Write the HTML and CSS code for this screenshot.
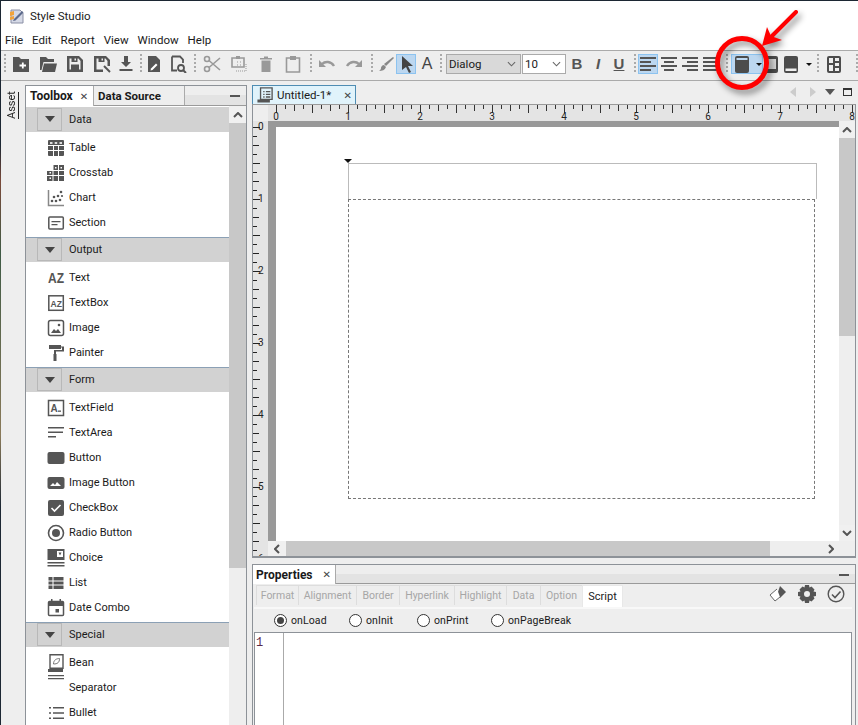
FILE: index.html
```html
<!DOCTYPE html>
<html lang="en">

<head>
    <meta charset="UTF-8">
    <meta name="viewport" content="width=device-width, initial-scale=1.0">
    <title>Style Studio</title>
    <link rel="stylesheet" href="styles.css">
</head>

<body>
    <div class="window">
        <div class="titlebar">
            <svg class="app-icon" viewBox="0 0 16 16">
                <path d="M2 2h9l3 3v10H2z" fill="#d5d9e6" stroke="#8a8fa5" />
                <path d="M1 4l4-1v4l-4 1zM1 9l4-1v3l-4 1z" fill="#f2a33a" />
                <path d="M5 11l8-8 1.500 1.500-8 8L4 13z" fill="#5c6a8c" />
            </svg>
            <span>Style Studio</span>
        </div>

        <div class="menubar">
            <span>File</span>
            <span>Edit</span>
            <span>Report</span>
            <span>View</span>
            <span>Window</span>
            <span>Help</span>
        </div>

        <div class="toolbar">
            <div class="group group-file">
                <span class="grip"></span>
                <div class="tools gap-9">
                    <svg class="ic" viewBox="0 0 18 18"><path d="M1 2h6l2 2h8v13H1z" /><path d="M7.500 10.500h6.500M10.800 7.500v6" stroke="#fff" stroke-width="1.800" /></svg>
                    <svg class="ic" viewBox="0 0 18 18"><path d="M1 2h6l2 2h6v3H4.500L2.500 15H1zM5 8.500h13L16 17H3z" /></svg>
                    <svg class="ic" viewBox="0 0 18 18"><path d="M2 1h11l4 4v12H1V1zM3.500 3.500v11h11V6l-2-2.500H11.500V7h-6V3.500zM8.500 3.500V5.500h1.500V3.500zM5 9.500h8v5H5z" fill-rule="evenodd" /></svg>
                    <svg class="ic" viewBox="0 0 18 18"><path d="M2 1h11l4 4v6h-2.500V6l-2-2.500H11.500V7h-6V3.500h-2v11H10V17H1V1zM8.500 3.500V5.500h1.500V3.500z" fill-rule="evenodd" /><path d="M11 11l6 6" stroke="#555" stroke-width="2" /></svg>
                    <svg class="ic ic-after-narrow" viewBox="0 0 18 18"><path d="M7 1h4v6h3l-5 5-5-5h3zM2.500 14h13v2h-13z" /></svg>
                </div>
            </div>

            <div class="group group-doc">
                <span class="grip"></span>
                <div class="tools gap-6">
                    <svg class="ic" viewBox="0 0 18 18"><path d="M3 1h8l4 4v12H3z" /><path d="M6 13.500l5-5 1.500 1.500-5 5-2 .5z" fill="#fff" /></svg>
                    <svg class="ic" viewBox="0 0 18 18"><path d="M3 1.500h8l3 3V8M3 1.500V15.500H8" fill="none" stroke="#555" stroke-width="1.800" /><circle cx="12" cy="13" r="3" fill="none" stroke="#555" stroke-width="1.800" /><path d="M14 15l3 3" stroke="#555" stroke-width="2" /></svg>
                </div>
            </div>

            <div class="group group-edit">
                <span class="grip"></span>
                <div class="tools gap-9 off">
                    <svg class="ic" viewBox="0 0 18 18"><circle cx="4" cy="4" r="2.500" fill="none" stroke="#999" stroke-width="1.600" /><circle cx="4" cy="14" r="2.500" fill="none" stroke="#999" stroke-width="1.600" /><path d="M6 5.500L17 15M6 12.500L17 3" stroke="#999" stroke-width="1.600" /></svg>
                    <svg class="ic" viewBox="0 0 18 18"><path d="M2 3h12v9H2z" fill="none" stroke="#999" stroke-width="1.600" /><path d="M6 1h4v3H6z" /><path d="M7 7h1M10 7h1M7 10h1M10 10h1M16 9v7M6 16h10" stroke="#999" stroke-dasharray="1 1" /></svg>
                    <svg class="ic" viewBox="0 0 18 18"><path d="M3 3h12v1.500H3zM7 1.500h4V3H7zM4.500 5.500h9V17h-9z" /></svg>
                    <svg class="ic" viewBox="0 0 18 18"><path d="M2.500 3h13v14h-13z" fill="none" stroke="#999" stroke-width="1.600" /><path d="M6 1h6v4H6z" /></svg>
                </div>
            </div>

            <div class="group group-undo">
                <span class="grip"></span>
                <div class="tools gap-9 off">
                    <svg class="ic" viewBox="0 0 18 18"><path d="M4 9c3-3 9-3 12 2" fill="none" stroke="#999" stroke-width="2.400" /><path d="M1 5v7h7z" /></svg>
                    <svg class="ic" viewBox="0 0 18 18"><path d="M14 9c-3-3-9-3-12 2" fill="none" stroke="#999" stroke-width="2.400" /><path d="M17 5v7h-7z" /></svg>
                </div>
            </div>

            <div class="group group-select">
                <span class="grip"></span>
                <div class="tools gap-2">
                    <svg class="ic" viewBox="0 0 18 18"><path d="M17 2l1 1-8 8-2-2z" fill="#888" /><path d="M8 10l2 2c-1 3-4 4-7 4 1.500-1 2-2 2-3s1-3 3-3z" fill="#888" /></svg>
                    <span class="tool-on tool-on-20"><svg class="ic" viewBox="0 0 18 18"><path d="M5 1l11 10h-5l3 6-2 1-3-6-4 3z" fill="#444" /></svg></span>
                    <span class="glyph glyph-a">A</span>
                </div>
            </div>

            <div class="group group-font">
                <span class="grip"></span>
                <div class="combo combo-font">
                    <span>Dialog</span>
                    <svg class="chev" viewBox="0 0 10 6"><path d="M1 1l4 4 4-4" /></svg>
                </div>
                <div class="combo combo-size">
                    <span>10</span>
                    <svg class="chev" viewBox="0 0 10 6"><path d="M1 1l4 4 4-4" /></svg>
                </div>
                <div class="tools gap-3 tools-style">
                    <span class="glyph glyph-b">B</span>
                    <span class="glyph glyph-i">I</span>
                    <span class="glyph glyph-u">U</span>
                </div>
            </div>

            <div class="group group-align">
                <span class="grip"></span>
                <div class="tools gap-3">
                    <span class="tool-on tool-on-20 tool-on-pull"><svg class="ic" viewBox="0 0 18 18"><path d="M1 2h16v2H1zM1 6h11v2H1zM1 10h16v2H1zM1 14h11v2H1z" /></svg></span>
                    <svg class="ic" viewBox="0 0 18 18"><path d="M1 2h16v2H1zM4 6h10v2H4zM1 10h16v2H1zM4 14h10v2H4z" /></svg>
                    <svg class="ic" viewBox="0 0 18 18"><path d="M1 2h16v2H1zM6 6h11v2H6zM1 10h16v2H1zM6 14h11v2H6z" /></svg>
                    <svg class="ic" viewBox="0 0 18 18"><path d="M1 2h16v2H1zM1 6h16v2H1zM1 10h16v2H1zM1 14h16v2H1z" /></svg>
                </div>
            </div>

            <div class="group group-band">
                <span class="grip"></span>
                <div class="tool-on tool-on-band">
                    <svg class="ic ic-band" viewBox="0 0 14 17"><rect width="14" height="17" rx="2" /><path d="M1.500 2h11v2h-11z" fill="#bcd7f0" /></svg>
                    <span class="caret caret-band"></span>
                </div>
                <svg class="ic ic-band ic-band-mid" viewBox="0 0 14 17"><rect width="14" height="17" rx="2" /><path d="M2 3h10v10H2z" fill="#d8d8d8" /></svg>
                <svg class="ic ic-band ic-band-end" viewBox="0 0 14 17"><rect width="14" height="17" rx="2" /><path d="M1.500 12.500h11v2.500h-11z" fill="#eee" /></svg>
                <span class="caret caret-last"></span>
            </div>

            <div class="group group-layout">
                <span class="grip"></span>
                <svg class="ic ic-layout" viewBox="0 0 14 17"><rect width="14" height="17" rx="2" /><path d="M2 2h4v5H2zM8 2h4v3H8zM8 7h4v3H8zM2 9h4v6H2zM8 12h4v3H8z" fill="#eee" /></svg>
                <span class="grip grip-end"></span>
            </div>
        </div>

        <div class="main">
            <div class="rail"><span class="rail-label">Asset</span></div>

            <div class="toolbox">
                <div class="tabstrip">
                    <div class="tab tab-on tab-toolbox">Toolbox <span class="tab-x">&#10005;</span></div>
                    <div class="tab tab-source">Data Source</div>
                    <span class="minimize"></span>
                </div>

                <div class="toolbox-body">
                    <div class="palette">
                        <div class="section section-first">
                            <div class="section-head"><span class="toggle"></span>Data</div>
                            <div class="section-items">
                                <div class="item"><svg class="ic" viewBox="0 0 18 18"><rect x="1" y="1" width="16" height="16" rx="1" /><path d="M3 3h2.500v2H3zM7.700 3h2.500v2H7.700zM12.500 3H15v2h-2.500z" fill="#ddd" /><path d="M0 6.500h18M0 11.500h18M6.500 6v12M11.500 6v12" stroke="#fff" /></svg>Table</div>
                                <div class="item"><svg class="ic" viewBox="0 0 18 18"><path d="M6 1h11v16H0V6h6z" /><path d="M0 6.500h18M0 11.500h18M6 1v17M11.500 1v17" stroke="#fff" /><path d="M8 3h1.500v1.500H8zM13.500 3H15v1.500h-1.500zM2.500 13.500H4V15H2.500zM2.500 8H4v1.500H2.500z" fill="#fff" /></svg>Crosstab</div>
                                <div class="item"><svg class="ic" viewBox="0 0 18 18"><path d="M1.500 1v15.500H17" fill="none" stroke="#888" stroke-width="1.500" /><circle cx="5" cy="12" r="1.300" /><circle cx="9" cy="12" r="1.300" /><circle cx="13" cy="11" r="1.300" /><circle cx="7" cy="8" r="1.300" /><circle cx="11" cy="7" r="1.300" /><circle cx="14" cy="3" r="1.300" /><circle cx="15" cy="7" r="1.100" /></svg>Chart</div>
                                <div class="item"><svg class="ic" viewBox="0 0 18 18"><rect x="1.800" y="3" width="14.500" height="12" rx="1" fill="none" stroke="#555" stroke-width="1.500" /><path d="M4.500 7h9v1.300h-9zM4.500 10h6v1.300h-6z" /></svg>Section</div>
                            </div>
                        </div>

                        <div class="section">
                            <div class="section-head"><span class="toggle"></span>Output</div>
                            <div class="section-items">
                                <div class="item"><svg class="ic" viewBox="0 0 18 18"><text class="ic-text" x="1" y="11.500" font-size="12" transform="scale(1 1.200)">AZ</text></svg>Text</div>
                                <div class="item"><svg class="ic" viewBox="0 0 18 18"><rect x="1.800" y="1.800" width="14.500" height="14.500" fill="none" stroke="#555" stroke-width="1.500" /><text class="ic-text" x="3.500" y="12.500" font-size="8.500">AZ</text></svg>TextBox</div>
                                <div class="item"><svg class="ic" viewBox="0 0 18 18"><rect x="1.500" y="1.500" width="15" height="15" rx="2" fill="none" stroke="#555" stroke-width="1.500" /><path d="M4 14l3-4 2 2 2-2 3 4z" /><circle cx="12" cy="6" r="1.300" /></svg>Image</div>
                                <div class="item"><svg class="ic" viewBox="0 0 18 18"><path d="M2 1h12v4H2zM14 2.500h3v5H9V10H7V6h8V3.500h-1zM6.500 10h3v7h-3z" /></svg>Painter</div>
                            </div>
                        </div>

                        <div class="section">
                            <div class="section-head"><span class="toggle"></span>Form</div>
                            <div class="section-items">
                                <div class="item"><svg class="ic" viewBox="0 0 18 18"><rect x="1.500" y="1.500" width="15" height="15" fill="none" stroke="#555" stroke-width="1.500" /><text class="ic-text" x="3.500" y="12.500" font-size="10">A</text><path d="M11 11.500h3v1.300h-3z" /></svg>TextField</div>
                                <div class="item"><svg class="ic" viewBox="0 0 18 18"><path d="M1 3h16v1.400H1zM1 7.500h15v1.400H1zM1 12h8v1.400H1z" /></svg>TextArea</div>
                                <div class="item"><svg class="ic" viewBox="0 0 18 18"><rect x="0.500" y="3" width="17" height="12" rx="2" /></svg>Button</div>
                                <div class="item"><svg class="ic" viewBox="0 0 18 18"><rect x="0.500" y="3" width="17" height="12" rx="2" /><path d="M3 12l3-3 2 2 2-3 4 4z" fill="#fff" /></svg>Image Button</div>
                                <div class="item"><svg class="ic" viewBox="0 0 18 18"><rect x="1" y="1" width="16" height="16" rx="2" /><path d="M4.500 9l3 3 6-6" fill="none" stroke="#fff" stroke-width="1.600" /></svg>CheckBox</div>
                                <div class="item"><svg class="ic" viewBox="0 0 18 18"><circle cx="9" cy="9" r="7.500" fill="none" stroke="#555" stroke-width="1.600" /><circle cx="9" cy="9" r="4" /></svg>Radio Button</div>
                                <div class="item"><svg class="ic" viewBox="0 0 18 18"><path d="M0.500 0h17v11h-17z" /><path d="M10 2h6v6h-6z" fill="#fff" /><path d="M11.500 3.500h3l-1.500 3z" /><path d="M0.500 13h17v1.400h-17zM0.500 16h17v1.400h-17z" /></svg>Choice</div>
                                <div class="item"><svg class="ic" viewBox="0 0 18 18"><path d="M1.500 3h15v12h-15z" /><path d="M1 7h17M1 11h17M6 3v12" stroke="#fff" /></svg>List</div>
                                <div class="item"><svg class="ic" viewBox="0 0 18 18"><rect x="1.500" y="2.500" width="15" height="14" rx="1" fill="none" stroke="#555" stroke-width="1.500" /><path d="M1.500 3h15v4h-15zM4 0h1.500v3H4zM12.500 0H14v3h-1.500zM8.500 10H12v3.500H8.500z" /></svg>Date Combo</div>
                            </div>
                        </div>

                        <div class="section">
                            <div class="section-head"><span class="toggle"></span>Special</div>
                            <div class="section-items">
                                <div class="item"><svg class="ic" viewBox="0 0 18 18"><path d="M3 0.800h13v13.500H3z" fill="none" stroke="#555" stroke-width="1.400" /><path d="M6.500 10c0-4 3-5.500 6-5.500 0 4-2 5.500-6 5.500z" fill="none" stroke="#777" /><path d="M1 15h15v3H1z" /></svg>Bean</div>
                                <div class="item"><svg class="ic ic-high" viewBox="0 0 18 18"><path d="M1 3h16v1.300H1zM1 6h16v1.300H1z" /></svg>Separator</div>
                                <div class="item"><svg class="ic" viewBox="0 0 18 18"><path d="M6 3h11v1.400H6zM6 8.300h11v1.400H6zM6 13.600h11V15H6zM2 3h2v1.400H2zM2 8.300h2v1.400H2zM2 13.600h2V15H2z" /></svg>Bullet</div>
                            </div>
                        </div>
                    </div>

                    <div class="scroll-v scroll-palette">
                        <div class="scroll-btn"><svg class="arrow" viewBox="0 0 10 6"><path d="M1 5l4-4 4 4" /></svg></div>
                        <div class="scroll-thumb"></div>
                    </div>
                </div>
            </div>

            <div class="workspace">
                <div class="doc-tabs">
                    <div class="doc-tab">
                        <svg class="ic" viewBox="0 0 18 18"><path d="M4 1h13v13H4z" fill="none" stroke="#555" stroke-width="1.500" /><path d="M7 4.500h1.500V6H7zM10 4.500h5V6h-5zM7 7.500h1.500V9H7zM10 7.500h5V9h-5zM7 10.500h1.500V12H7zM10 10.500h5V12h-5zM0.500 14h14v3.500H0.500z" /></svg>
                        <span>Untitled-1*</span>
                        <span class="tab-x">&#10005;</span>
                    </div>
                    <div class="doc-controls">
                        <span class="nav nav-left"></span>
                        <span class="nav nav-right"></span>
                        <span class="nav-down"></span>
                        <span class="maximize"></span>
                    </div>
                </div>

                <div class="doc">
                    <div class="ruler-row">
                        <div class="ruler-corner"></div>
                        <div class="ruler-x">
                            <span>0</span><span>1</span><span>2</span><span>3</span><span>4</span><span>5</span><span>6</span><span>7</span><span>8</span>
                        </div>
                    </div>
                    <div class="doc-body">
                        <div class="ruler-y">
                            <span>0</span><span>1</span><span>2</span><span>3</span><span>4</span><span>5</span><span>6</span>
                        </div>
                        <div class="doc-view">
                            <div class="doc-view-top">
                                <div class="canvas">
                                    <div class="page">
                                        <div class="report-header"></div>
                                        <div class="report-body"></div>
                                    </div>
                                </div>
                                <div class="scroll-v scroll-doc">
                                    <div class="scroll-btn"><svg class="arrow" viewBox="0 0 10 6"><path d="M1 5l4-4 4 4" /></svg></div>
                                    <div class="scroll-thumb"></div>
                                    <div class="scroll-btn scroll-btn-end"><svg class="arrow" viewBox="0 0 10 6"><path d="M1 1l4 4 4-4" /></svg></div>
                                </div>
                            </div>
                            <div class="scroll-h">
                                <div class="scroll-btn-h"><svg class="arrow-h" viewBox="0 0 6 10"><path d="M5 1L1 5l4 4" /></svg></div>
                                <div class="scroll-thumb-h"></div>
                                <div class="scroll-btn-h scroll-btn-h-end"><svg class="arrow-h" viewBox="0 0 6 10"><path d="M1 1l4 4-4 4" /></svg></div>
                            </div>
                        </div>
                    </div>
                </div>

                <div class="properties">
                    <div class="tabstrip tabstrip-props">
                        <div class="tab tab-on tab-props">Properties <span class="tab-x">&#10005;</span></div>
                        <span class="minimize"></span>
                    </div>

                    <div class="subtabs">
                        <span class="subtab subtab-format">Format</span>
                        <span class="subtab subtab-alignment">Alignment</span>
                        <span class="subtab subtab-border">Border</span>
                        <span class="subtab subtab-hyperlink">Hyperlink</span>
                        <span class="subtab subtab-highlight">Highlight</span>
                        <span class="subtab subtab-data">Data</span>
                        <span class="subtab subtab-option">Option</span>
                        <span class="subtab subtab-script">Script</span>
                        <div class="prop-actions">
                            <svg class="ic" viewBox="0 0 18 18"><path d="M11 1l6 6-6 6-3-3z" /><path d="M8 4L1 10l5 6 5-4" fill="#fff" stroke="#666" /></svg>
                            <svg class="ic" viewBox="0 0 18 18"><path d="M7 0h4l.5 2.500 2-1 3 3-1 2L18 7v4l-2.500.5 1 2-3 3-2-1L11 18H7l-.5-2.500-2 1-3-3 1-2L0 11V7l2.500-.5-1-2 3-3 2 1zM9 6a3 3 0 1 0 0 6 3 3 0 0 0 0-6z" fill-rule="evenodd" /></svg>
                            <svg class="ic" viewBox="0 0 18 18"><circle cx="9" cy="9" r="7.800" fill="none" stroke="#555" stroke-width="1.400" /><path d="M5 9.500l3 3 5.500-6" fill="none" stroke="#555" stroke-width="1.600" /></svg>
                        </div>
                    </div>

                    <div class="events">
                        <label class="event event-load"><span class="radio radio-on"></span>onLoad</label>
                        <label class="event event-init"><span class="radio"></span>onInit</label>
                        <label class="event event-print"><span class="radio"></span>onPrint</label>
                        <label class="event event-break"><span class="radio"></span>onPageBreak</label>
                    </div>

                    <div class="editor">
                        <div class="gutter">1</div>
                    </div>
                </div>
            </div>
        </div>

        <!-- red callout drawn on top of the screenshot -->
        <svg class="callout" viewBox="0 0 120 100">
            <circle cx="42" cy="63" r="24.500" fill="none" stroke="#f00" stroke-width="5" />
            <path d="M96 12L72 36" stroke="#f00" stroke-width="4" stroke-linecap="round" />
            <path d="M62 46l5-19 4 9 11 4z" fill="#f00" />
        </svg>
    </div>
</body>

</html>
```

FILE: styles.css
```css
* {
    box-sizing: border-box;
    padding: 0;
    margin: 0;
}

html,
body {
    height: 100%;
    overflow: hidden;
}

body {
    background: linear-gradient(#1c2733 0 20%, #7a4a3a 25%, #3f5a45 35%, #8a7a5a 60%, #1c2733 70%);
    padding: 1px 0 0 1px;
    font-family: Roboto, "Liberation Sans", sans-serif;
    font-size: 11px;
    color: #1a1a1a;
}

.window {
    position: relative;
    width: 857px;
    height: 724px;
    background-color: #eee;
    display: flex;
    flex-direction: column;
    overflow: hidden;
}

.ic {
    width: 18px;
    height: 18px;
    fill: #555;
    flex: none;
}

.ic-text {
    font-family: "Liberation Sans", sans-serif;
    font-weight: bold;
    fill: #555;
}

/* title and menu */
.titlebar {
    height: 29px;
    flex: none;
    background-color: white;
    display: flex;
    align-items: center;
    padding: 1px 0 0 8px;
    gap: 5px;
    font-size: 11.5px;
}

.app-icon {
    width: 16px;
    height: 16px;
}

.menubar {
    height: 20px;
    flex: none;
    background-color: white;
    display: flex;
    align-items: center;
    padding-left: 4px;
    gap: 9px;
    font-size: 11.5px;
}

/* toolbar */
.toolbar {
    height: 31px;
    flex: none;
    display: flex;
    align-items: center;
    padding-bottom: 3px;
    border-top: 1px solid #aaa;
    border-bottom: 1px solid #aaa;
    background-color: #eee;
}

.group {
    display: flex;
    align-items: center;
}

.tools {
    display: flex;
    align-items: center;
}

.gap-2 {
    gap: 2px;
}

.gap-3 {
    gap: 3px;
}

.gap-6 {
    gap: 6px;
}

.gap-9 {
    gap: 9px;
}

.off .ic {
    fill: #999;
}

.grip {
    width: 2px;
    height: 20px;
    flex: none;
    background: repeating-linear-gradient(#aaa 0 2px, transparent 2px 4px);
}

.group-file {
    margin-left: 3px;
}

.group-file .grip {
    margin-right: 6px;
}

.ic-after-narrow {
    margin-left: -3px;
}

.group-doc {
    margin-left: 5px;
}

.group-doc .grip {
    margin-right: 3px;
}

.group-edit {
    margin-left: 7px;
}

.group-edit .grip {
    margin-right: 7px;
}

.group-undo {
    margin-left: 8px;
}

.group-undo .grip {
    margin-right: 6px;
}

.group-select {
    margin-left: 8px;
}

.group-select .grip {
    margin-right: 3px;
}

.group-font {
    margin-left: 4px;
}

.group-font .grip {
    margin-right: 4px;
}

.group-align {
    margin-left: 6px;
}

.group-align .grip {
    margin-right: 2px;
}

.group-band {
    margin-left: 6px;
}

.group-band .grip {
    margin-right: 3px;
}

.group-layout {
    margin-left: 5px;
}

.group-layout .grip {
    margin-right: 8px;
}

.grip-end {
    margin: 0 0 0 15px;
}

.tool-on {
    background-color: #bcd7f0;
    border: 1px solid #8cc3f0;
    display: flex;
    align-items: center;
    justify-content: center;
}

.tool-on-20 {
    width: 20px;
    height: 20px;
}

.tool-on-pull {
    margin-right: -1px;
}

.tool-on-band {
    width: 32px;
    height: 20px;
    position: relative;
    justify-content: flex-start;
    padding-left: 3px;
}

.ic-band {
    width: 14px;
    height: 17px;
    fill: #4c4c4c;
}

.ic-band-mid {
    margin-left: 1px;
}

.ic-band-end {
    margin-left: 6px;
}

.ic-layout {
    width: 14px;
    height: 17px;
    fill: #4c4c4c;
}

.caret {
    width: 0;
    height: 0;
    border-left: 3px solid transparent;
    border-right: 3px solid transparent;
    border-top: 3px solid #111;
}

.caret-band {
    margin-left: 7px;
}

.caret-last {
    margin-left: 8px;
}

.glyph {
    width: 18px;
    text-align: center;
    font-family: "Liberation Sans", sans-serif;
    font-size: 15px;
    font-weight: bold;
    color: #555;
    line-height: 18px;
}

.glyph-a {
    font-weight: normal;
    color: #444;
    font-size: 16px;
}

.glyph-i {
    font-style: italic;
}

.glyph-u {
    text-decoration: underline;
}

.combo {
    height: 20px;
    display: flex;
    align-items: center;
    justify-content: space-between;
    border: 1px solid #aaa;
    padding: 0 4px 0 2px;
    font-size: 11.5px;
}

.combo-font {
    width: 75px;
    background-color: #d9d9d9;
}

.combo-size {
    width: 44px;
    margin-left: 1px;
    background-color: white;
}

.chev {
    width: 9px;
    height: 6px;
    fill: none;
    stroke: #666;
    stroke-width: 1.200;
}

.tools-style {
    margin-left: 2px;
}

/* main area */
.main {
    flex: 1;
    display: flex;
    min-height: 0;
}

.rail {
    width: 24px;
    flex: none;
    display: flex;
    justify-content: center;
    padding: 11px 2px 0 0;
}

.rail-label {
    writing-mode: vertical-rl;
    transform: rotate(180deg);
    height: 27px;
    font-size: 11px;
    line-height: 12px;
    color: #222;
    border-left: 1px solid #222;
}

/* toolbox panel */
.toolbox {
    width: 222px;
    flex: none;
    margin-top: 4px;
    border: 1px solid #8d9298;
    border-bottom: none;
    background-color: #eee;
    display: flex;
    flex-direction: column;
}

.tabstrip {
    height: 20px;
    flex: none;
    display: flex;
    position: relative;
    border-bottom: 1px solid #9a9a9a;
    background: linear-gradient(#eee 0 50%, #e3e3e3 50%);
    font-size: 12px;
}

.tab {
    display: flex;
    align-items: center;
    font-weight: bold;
    border-right: 1px solid #aaa;
}

.tab-on {
    background-color: white;
    margin-bottom: -1px;
}

.tab-toolbox {
    width: 68px;
    padding-left: 4px;
    gap: 7px;
}

.tab-source {
    width: 91px;
    padding-left: 4px;
    background-color: #eee;
    font-size: 11.5px;
}

.tab-x {
    font-family: "DejaVu Sans", sans-serif;
    font-size: 10px;
    font-weight: normal;
    color: #444;
}

.minimize {
    width: 10px;
    height: 2px;
    background-color: #555;
    margin: 9px 6px 0 auto;
}

.toolbox-body {
    flex: 1;
    display: flex;
    min-height: 0;
    overflow: hidden;
}

.palette {
    width: 203px;
    flex: none;
    background-color: white;
    padding-top: 1px;
}

.section-head {
    height: 25px;
    display: flex;
    align-items: center;
    gap: 7px;
    padding: 0 0 1px 11px;
    background-color: #d2d2d2;
    border-top: 1px solid #8ba0b5;
}

.section-first .section-head {
    border-top: none;
}

.toggle {
    width: 25px;
    height: 23px;
    border: 1px solid #b8b8b8;
    display: flex;
    align-items: center;
    justify-content: center;
}

.toggle::before {
    content: "";
    border-left: 5px solid transparent;
    border-right: 5px solid transparent;
    border-top: 6px solid #444;
}

.section-items {
    padding: 3px 0 2px;
}

.item {
    height: 25px;
    display: flex;
    align-items: center;
    gap: 4px;
    padding-left: 21px;
}

.ic-high {
    margin-top: -14px;
}

.scroll-v {
    width: 17px;
    flex: none;
    display: flex;
    flex-direction: column;
}

.scroll-btn {
    height: 17px;
    flex: none;
    display: flex;
    align-items: center;
    justify-content: center;
    background-color: #f0f0f0;
}

.scroll-btn-end {
    margin-top: auto;
    height: 16px;
}

.arrow {
    width: 10px;
    height: 6px;
    fill: none;
    stroke: #555;
    stroke-width: 2;
}

.scroll-thumb {
    background-color: #c8c8c8;
}

.scroll-palette .scroll-thumb {
    height: 445px;
}

.scroll-doc .scroll-thumb {
    height: 198px;
}

/* workspace */
.workspace {
    width: 604px;
    flex: none;
    margin-left: 5px;
    margin-top: 4px;
    display: flex;
    flex-direction: column;
}

.doc-tabs {
    height: 19px;
    flex: none;
    display: flex;
}

.doc-tab {
    width: 104px;
    display: flex;
    align-items: center;
    gap: 4px;
    padding: 0 3px 0 4px;
    background-color: #e0f3fb;
    border: 1px solid #4f8db3;
    border-bottom: none;
    font-size: 11.5px;
    white-space: nowrap;
}

.doc-tab .ic {
    width: 16px;
    height: 16px;
}

.doc-tab .tab-x {
    margin-left: auto;
}

.doc-controls {
    flex: 1;
    display: flex;
    align-items: center;
    justify-content: flex-end;
    padding: 0 4px 5px 0;
}

.nav {
    width: 0;
    height: 0;
    border-top: 5px solid transparent;
    border-bottom: 5px solid transparent;
}

.nav-left {
    border-right: 6px solid #ccc;
    margin-right: 14px;
}

.nav-right {
    border-left: 6px solid #ccc;
    margin-right: 9px;
}

.nav-down {
    border-left: 5px solid transparent;
    border-right: 5px solid transparent;
    border-top: 6px solid #555;
    margin-right: 8px;
}

.maximize {
    width: 9px;
    height: 8px;
    border: 1px solid #333;
    border-top-width: 2px;
}

.doc {
    height: 454px;
    flex: none;
    display: flex;
    flex-direction: column;
    border-left: 1px solid #8d9298;
    border-right: 1px solid #8d9298;
    border-bottom: 2px solid #8d9298;
    border-top: 1px solid #9a9a9a;
}

.ruler-row {
    height: 16px;
    flex: none;
    display: flex;
}

.ruler-corner {
    width: 15px;
    flex: none;
}

.ruler-x {
    flex: 1;
    display: flex;
    align-items: flex-end;
    overflow: hidden;
    background:
        linear-gradient(to right, #333 1px, transparent 1px) 8px 0/36px 8px repeat-x,
        linear-gradient(to right, #333 1px, transparent 1px) 8px 0/18px 6px repeat-x,
        linear-gradient(to right, #333 1px, transparent 1px) 8px 0/9px 4px repeat-x,
        #e4e4e4;
}

.ruler-x span {
    width: 72px;
    flex: none;
    text-align: center;
    font-size: 10px;
    line-height: 9px;
    color: #222;
}

.ruler-x span:first-child {
    margin-left: -28px;
}

.doc-body {
    flex: 1;
    display: flex;
    min-height: 0;
}

.ruler-y {
    width: 15px;
    flex: none;
    display: flex;
    flex-direction: column;
    overflow: hidden;
    background:
        linear-gradient(#222 1px, transparent 1px) 0 6px/7px 36px repeat-y,
        linear-gradient(#222 1px, transparent 1px) 0 6px/6px 18px repeat-y,
        linear-gradient(#222 1px, transparent 1px) 0 6px/4px 9px repeat-y,
        #e4e4e4;
}

.ruler-y span {
    height: 72px;
    flex: none;
    display: flex;
    align-items: center;
    padding-left: 5px;
    font-size: 10px;
    color: #222;
}

.ruler-y span:first-child {
    margin-top: -31px;
}

.doc-view {
    flex: 1;
    display: flex;
    flex-direction: column;
    min-width: 0;
}

.doc-view-top {
    height: 420px;
    flex: none;
    display: flex;
}

.canvas {
    flex: 1;
    background-color: #999;
    padding: 6px 0 0 8px;
}

.page {
    height: 100%;
    background-color: white;
    padding: 36px 0 0 72px;
}

.report-header {
    position: relative;
    width: 469px;
    height: 36px;
    border: 1px solid #bbb;
    border-bottom: none;
}

.report-header::before {
    content: "";
    position: absolute;
    left: -5px;
    top: -5px;
    border-left: 4px solid transparent;
    border-right: 4px solid transparent;
    border-top: 4px solid #111;
}

.report-body {
    width: 467px;
    height: 300px;
    border: 1px dashed #777;
}

.scroll-doc {
    width: 16px;
    background-color: #eee;
}

.scroll-h {
    height: 15px;
    flex: none;
    display: flex;
    background-color: #eee;
}

.scroll-btn-h {
    width: 18px;
    flex: none;
    display: flex;
    align-items: center;
    justify-content: center;
    background-color: #f0f0f0;
}

.scroll-btn-h-end {
    margin-left: auto;
    width: 48px;
    justify-content: flex-end;
    padding-right: 21px;
    background: none;
}

.arrow-h {
    width: 6px;
    height: 10px;
    fill: none;
    stroke: #555;
    stroke-width: 2;
}

.scroll-thumb-h {
    width: 484px;
    background-color: #c8c8c8;
}

/* properties */
.properties {
    flex: 1;
    margin-top: 6px;
    display: flex;
    flex-direction: column;
    border: 1px solid #8d9298;
    border-bottom: none;
    min-height: 0;
}

.tabstrip-props {
    height: 19px;
}

.tab-props {
    width: 83px;
    padding-left: 3px;
    gap: 10px;
}

.subtabs {
    height: 23px;
    flex: none;
    display: flex;
    padding: 1px 0 0 3px;
    font-size: 10.5px;
}

.subtab {
    height: 20px;
    display: flex;
    align-items: center;
    justify-content: center;
    color: #a6a6a6;
    background-color: #eee;
    border: 1px solid #ddd;
    border-bottom: none;
    margin-left: -1px;
}

.subtab-format {
    width: 43px;
    margin-left: 0;
}

.subtab-alignment {
    width: 59px;
}

.subtab-border {
    width: 44px;
}

.subtab-hyperlink {
    width: 56px;
}

.subtab-highlight {
    width: 53px;
}

.subtab-data {
    width: 35px;
}

.subtab-option {
    width: 43px;
}

.subtab-script {
    width: 41px;
    height: 22px;
    color: #222;
    background-color: white;
    border-color: #e8e8e8;
    font-size: 11px;
}

.prop-actions {
    margin-left: auto;
    display: flex;
    gap: 11px;
    padding: 0 10px 0 0;
}

.events {
    height: 25px;
    flex: none;
    display: flex;
    align-items: center;
    padding-left: 20px;
    margin: 0 3px 0 1px;
    border-top: 2px solid #f8f8f8;
    font-size: 10.5px;
    letter-spacing: 0.1px;
}

.event {
    display: flex;
    align-items: center;
    gap: 4px;
}

.event-load {
    width: 75px;
}

.event-init {
    width: 68px;
}

.event-print {
    width: 74px;
}

.radio {
    width: 13px;
    height: 13px;
    border: 1px solid #333;
    border-radius: 50%;
    background-color: white;
    display: flex;
    align-items: center;
    justify-content: center;
}

.radio-on::before {
    content: "";
    width: 7px;
    height: 7px;
    border-radius: 50%;
    background-color: #444;
}

.editor {
    flex: 1;
    margin: 0 3px 0 1px;
    background-color: white;
    border: 1px solid #8d9298;
    border-bottom: none;
}

.gutter {
    width: 29px;
    height: 100%;
    border-right: 1px solid #aaa;
    padding: 3px 0 0 1px;
    font-family: "Liberation Mono", monospace;
    font-size: 12px;
    color: #5a2a4a;
}

/* annotation */
.callout {
    position: absolute;
    left: 699px;
    top: -1px;
    width: 120px;
    height: 100px;
    overflow: visible;
    filter: drop-shadow(3px 4px 3px rgba(0, 0, 0, 0.45));
}
```
